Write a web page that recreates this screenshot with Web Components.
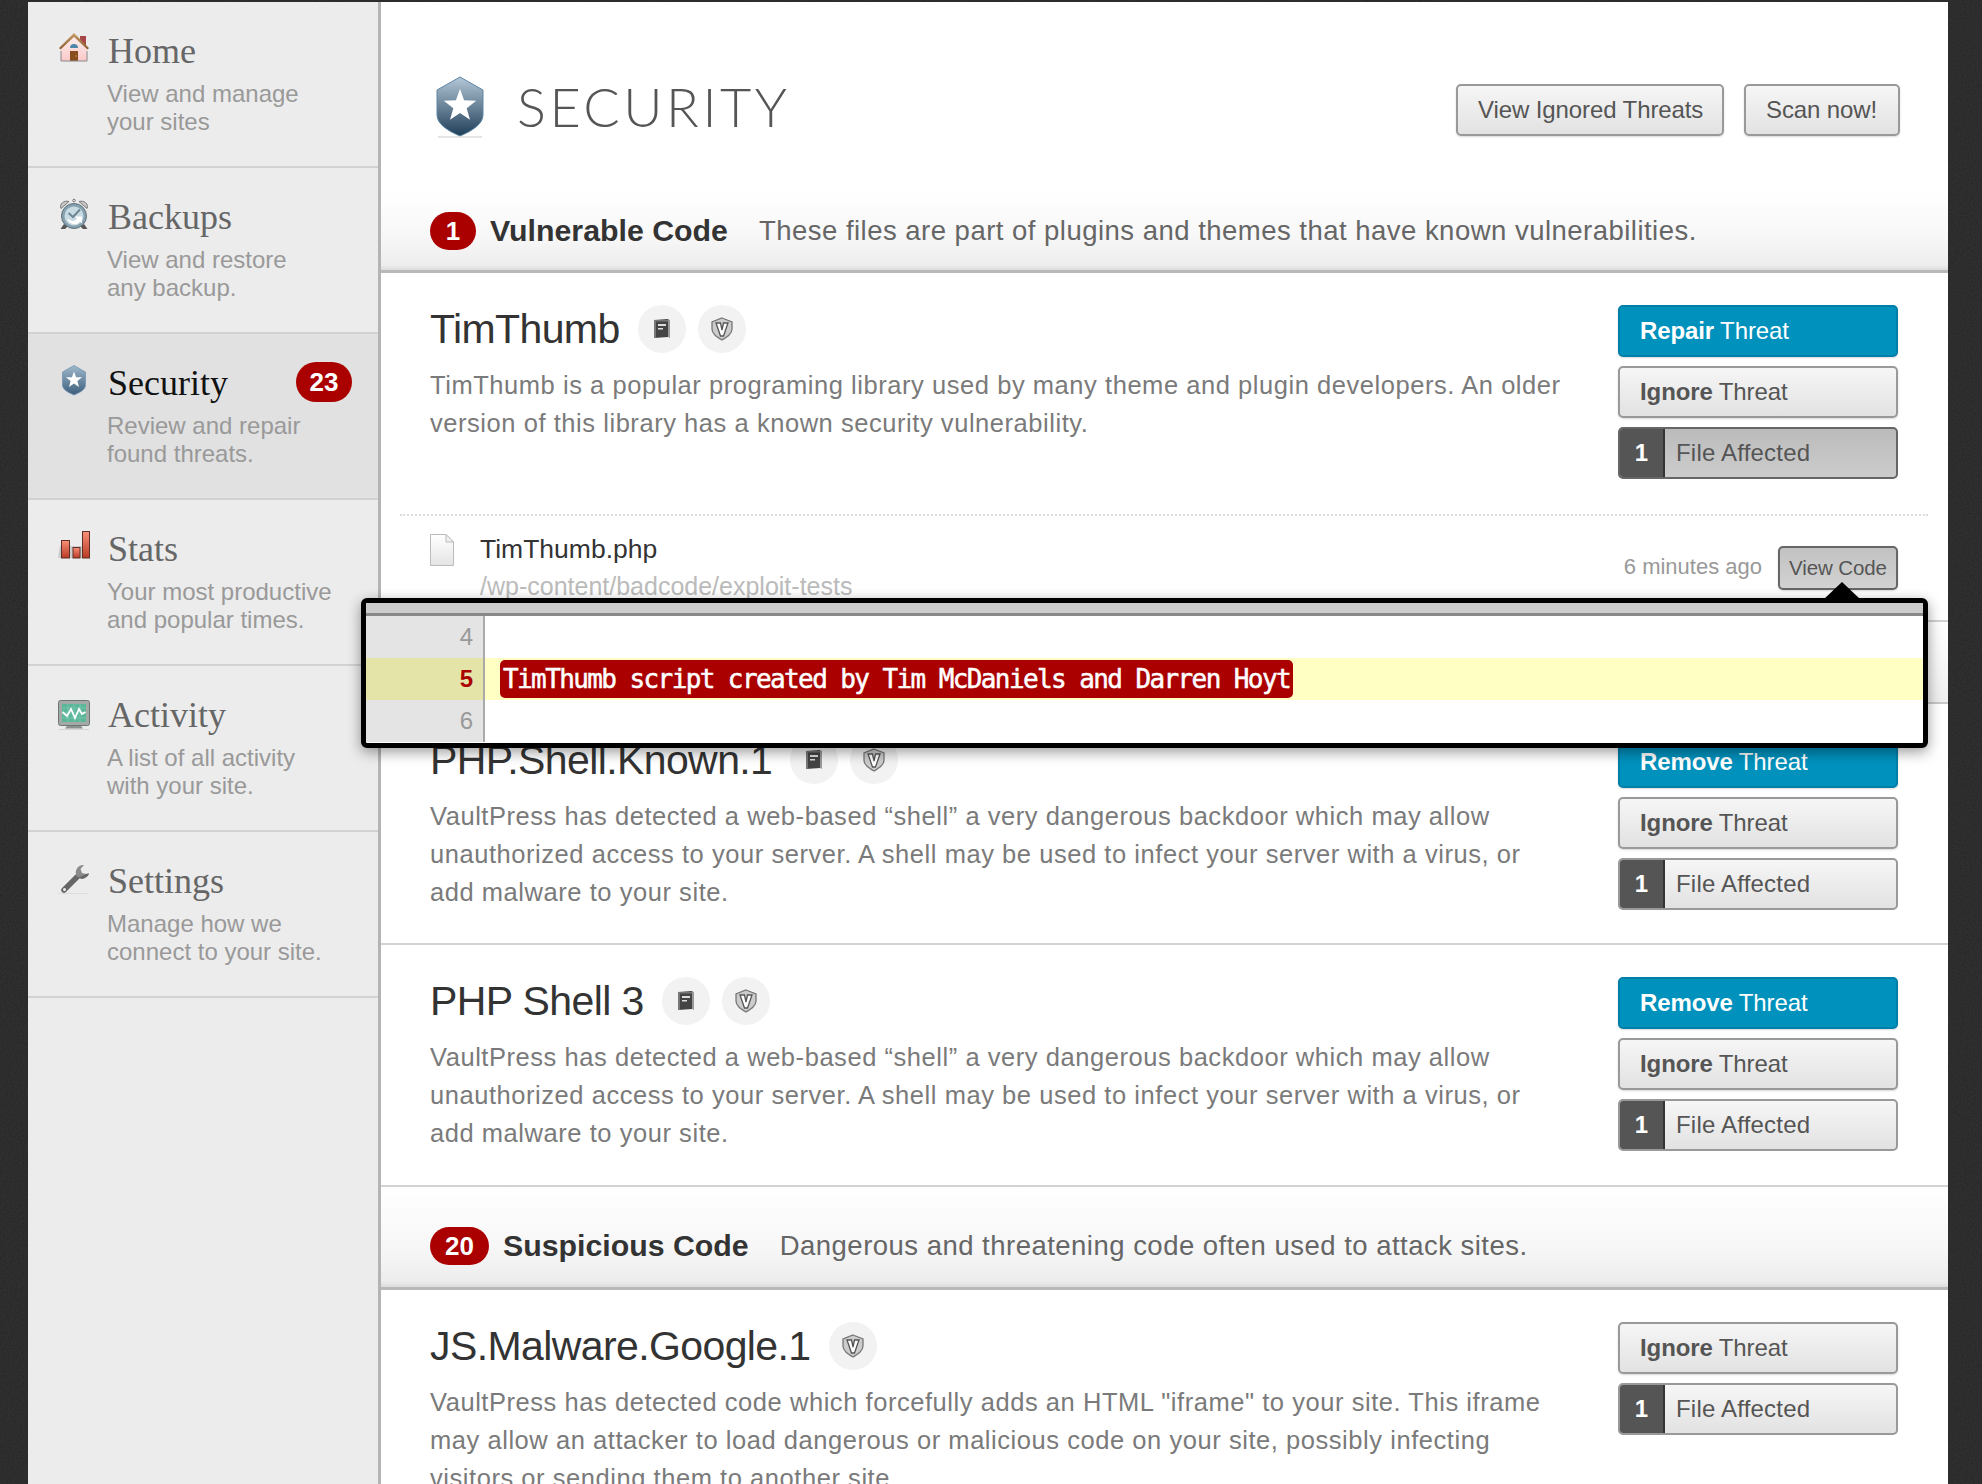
<!DOCTYPE html>
<html>
<head>
<meta charset="utf-8">
<title>Security</title>
<style>
html, body { margin: 0; height: 100%; overflow: hidden; background: #2a2a2a; }
body { font-family: "Liberation Sans", Arial, sans-serif; }
svg { display: block; }
</style>
</head>
<body>
<vp-app>
  <vp-nav-item slot="nav" label="Home" lines="View and manage|your sites">
    <svg slot="icon" width="36" height="36" viewBox="0 0 36 36"><defs><linearGradient id="roof" x1="0" y1="0" x2="0" y2="1"><stop offset="0" stop-color="#c9a06a"/><stop offset="1" stop-color="#8a5a2b"/></linearGradient><linearGradient id="wall" x1="0" y1="0" x2="0" y2="1"><stop offset="0" stop-color="#fff0f0"/><stop offset="1" stop-color="#fbc9c9"/></linearGradient></defs><rect x="22" y="4" width="6" height="9" fill="#a8474a"/><path d="M3 15 16 3 29 15V29H3z" fill="url(#wall)"/><path d="M1 16 16 1 31 16 29.500 17.500 16 5 2.500 17.500z" fill="url(#roof)"/><path d="M12 16a4 4 0 0 1 8 0z" fill="#4f87a8"/><rect x="12" y="19" width="8" height="10" fill="#8a4f1e"/><rect x="17.500" y="23.500" width="1" height="1" fill="#e8d090"/><path d="M3 19V29H29V19" fill="none" stroke="#888" stroke-width="1"/></svg>
  </vp-nav-item>
  <vp-nav-item slot="nav" label="Backups" lines="View and restore|any backup.">
    <svg slot="icon" width="36" height="36" viewBox="0 0 36 36"><path d="M3 10.500C1 6 6 2 11 3.500z M29 10.500C31 6 26 2 21 3.500z" fill="#c8c8c8" stroke="#777"/><circle cx="16" cy="2.500" r="1.300" fill="none" stroke="#777"/><path d="M6 26 2.500 31H7L10 28zM26 26l3.500 5H25l-3-3z" fill="#555"/><circle cx="16" cy="18" r="12.500" fill="#86a2b0" stroke="#5f6f78"/><circle cx="16" cy="18" r="9.500" fill="#c9dbe2"/><path d="M10.500 15 15 19 22 11.500" fill="none" stroke="#6d8794" stroke-width="2"/><path d="M9.500 20.500a7 7 0 0 0 12.500 3l2 2v-7h-7l2 2a4.500 4.500 0 0 1-7.500 1z" fill="#fff"/></svg>
  </vp-nav-item>
  <vp-nav-item slot="nav" label="Security" lines="Review and repair|found threats." count="23" active>
    <svg slot="icon" width="36" height="36" viewBox="0 0 36 36"><defs><linearGradient id="shieldA" x1="0" y1="0" x2="0" y2="1"><stop offset="0" stop-color="#9fb8cb"/><stop offset="1" stop-color="#3c5e7c"/></linearGradient></defs><g transform="translate(4,1) scale(.5)"><path d="M24 1 47 14V40C47 49 36 55 24 60 12 55 1 49 1 40V14z" fill="url(#shieldA)" stroke="#6f93b0" stroke-width="1.500"/><path d="M24 13 28.100 24.300 40.200 24.700 30.700 32.200 34 43.800 24 37 14 43.800 17.300 32.200 7.800 24.700 19.900 24.300z" fill="#fff"/></g></svg>
  </vp-nav-item>
  <vp-nav-item slot="nav" label="Stats" lines="Your most productive|and popular times.">
    <svg slot="icon" width="36" height="36" viewBox="0 0 36 36"><defs><linearGradient id="bar" x1="0" y1="0" x2="0" y2="1"><stop offset="0" stop-color="#f98f77"/><stop offset="1" stop-color="#b93a24"/></linearGradient></defs><path d="M0 28 2 16H24V28z" fill="#ccc"/><rect x="3.500" y="10.500" width="8" height="17.500" fill="url(#bar)" stroke="#5f3028"/><rect x="15" y="17.500" width="7" height="10.500" fill="url(#bar)" stroke="#5f3028"/><rect x="24.500" y="1.500" width="7" height="26.500" fill="url(#bar)" stroke="#5f3028"/></svg>
  </vp-nav-item>
  <vp-nav-item slot="nav" label="Activity" lines="A list of all activity|with your site.">
    <svg slot="icon" width="36" height="36" viewBox="0 0 36 36"><rect x=".5" y="4.500" width="31" height="25" rx="2" fill="#a3aaa6" stroke="#6e7673"/><rect x="4" y="8" width="24" height="18" fill="#5cb79a"/><path d="M4 12H28M4 17H28M4 22H28M10 8V26M16 8V26M22 8V26" stroke="#78c9af" stroke-width=".7"/><path d="M4.500 16 9 20 13 13 17 22 21 13 24 18 27.500 16" fill="none" stroke="#fff" stroke-width="1.800"/><path d="M9 30H23L25 32.500H7z" fill="#8a918e"/><rect x="1" y="33" width="30" height="1" fill="#d4d4d4"/></svg>
  </vp-nav-item>
  <vp-nav-item slot="nav" label="Settings" lines="Manage how we|connect to your site.">
    <svg slot="icon" width="36" height="36" viewBox="0 0 36 36"><path d="M6 28 19 15" stroke="#666" stroke-width="5.500" stroke-linecap="round"/><path d="M31 11.500a7.500 7.500 0 0 1-12 3 7.500 7.500 0 0 1 7-11.500L22.500 7 24 11l4 1z" fill="#8a8a8a"/><path d="M19 15a7.500 7.500 0 0 0 12-3.500L28 12l-6 3z" fill="#666"/><circle cx="6.500" cy="27.500" r="1.500" fill="#eee"/><rect x="0" y="31" width="30" height="1" fill="#ddd"/></svg>
  </vp-nav-item>

  <vp-page-head heading="SECURITY">
    <svg slot="icon" width="48" height="62" viewBox="0 0 48 62"><defs><linearGradient id="shieldB" x1="0" y1="0" x2="0" y2="1"><stop offset="0" stop-color="#b4c8d8"/><stop offset="1" stop-color="#1f3e58"/></linearGradient></defs><path d="M24 1 47 14V39C47 48 36 55 24 60 12 55 1 48 1 39V14z" fill="url(#shieldB)" stroke="#5f86a6"/><path d="M24 13 28.100 24.300 40.200 24.700 30.700 32.200 34 43.800 24 37 14 43.800 17.300 32.200 7.800 24.700 19.900 24.300z" fill="#fff"/><rect x="2" y="60.500" width="44" height="1" fill="#ccc"/></svg>
    <vp-button slot="actions" size="head">View Ignored Threats</vp-button>
    <vp-button slot="actions" size="scan">Scan now!</vp-button>
  </vp-page-head>

  <vp-section-band count="1" heading="Vulnerable Code" text="These files are part of plugins and themes that have known vulnerabilities."></vp-section-band>

  <vp-threat name="TimThumb" action="Repair" book noborder lines="TimThumb is a popular programing library used by many theme and plugin developers. An older|version of this library has a known security vulnerability."></vp-threat>
  <vp-file-row name="TimThumb.php" path="/wp-content/badcode/exploit-tests" time="6 minutes ago"></vp-file-row>

  <vp-section-band empty></vp-section-band>

  <vp-threat name="PHP.Shell.Known.1" action="Remove" book lines="VaultPress has detected a web-based “shell” a very dangerous backdoor which may allow|unauthorized access to your server. A shell may be used to infect your server with a virus, or|add malware to your site."></vp-threat>
  <vp-threat name="PHP Shell 3" action="Remove" book noborder short lines="VaultPress has detected a web-based “shell” a very dangerous backdoor which may allow|unauthorized access to your server. A shell may be used to infect your server with a virus, or|add malware to your site."></vp-threat>

  <vp-section-band count="20" heading="Suspicious Code" text="Dangerous and threatening code often used to attack sites." wide></vp-section-band>

  <vp-threat name="JS.Malware.Google.1" noborder lines="VaultPress has detected code which forcefully adds an HTML &quot;iframe&quot; to your site. This iframe|may allow an attacker to load dangerous or malicious code on your site, possibly infecting|visitors or sending them to another site."></vp-threat>

  <vp-code-popup slot="overlay"></vp-code-popup>
</vp-app>

<script>
// small helper, every element renders its own shadow root from a string
function shadow(el, html) {
    el.attachShadow({ mode: 'open' }).innerHTML = html;
}

class VpApp extends HTMLElement {
    connectedCallback() {
        shadow(this, `
            <style>
                :host { display: block; position: relative; width: 1982px; height: 1484px; overflow: hidden; background: #303030; }
                .noise { position: absolute; inset: 0; }
                .frame { position: relative; display: grid; grid-template-columns: 350px 1570px; margin: 2px 0 0 28px; width: 1920px; height: 1482px; }
                nav { background: #ececec; display: flex; flex-direction: column; }
                main { background: #fff; border-left: 3px solid #b4b4b4; box-sizing: border-box; overflow: hidden; }
            </style>
            <svg class="noise" width="1982" height="1484"><filter id="n" color-interpolation-filters="sRGB"><feTurbulence type="fractalNoise" baseFrequency=".6" numOctaves="2"/><feColorMatrix values="0 0 0 0 .13  0 0 0 0 .13  0 0 0 0 .13  0 0 0 1.100 -.35"/></filter><rect width="1982" height="1484" filter="url(#n)"/></svg>
            <div class="frame">
                <nav><slot name="nav"></slot></nav>
                <main><slot></slot></main>
            </div>
            <slot name="overlay"></slot>
        `);
    }
}

class VpNavItem extends HTMLElement {
    connectedCallback() {
        const lines = this.getAttribute('lines').split('|').map(l => `<div>${l}</div>`).join('');
        const count = this.getAttribute('count');
        shadow(this, `
            <style>
                :host { display: block; height: 166px; box-sizing: border-box; border-bottom: 2px solid #d2d2d2; position: relative; padding: 30px 0 0 30px; background: #ececec; }
                :host([active]) { background: #e1e1e1; }
                .row { display: flex; gap: 14px; }
                .icon { width: 36px; height: 36px; flex: none; }
                h2 { margin: 0; font: 400 36px/38px "Liberation Serif", serif; color: #666; }
                :host([active]) h2 { color: #111; }
                .sub { margin: 10px 0 0 -1px; font: 24px/27.500px "Liberation Sans", sans-serif; color: #999; }
                .count { position: absolute; right: 26px; top: 28px; width: 56px; height: 40px; border-radius: 20px; background: #ab0000; color: #fff; font: 700 26px/40px "Liberation Sans", sans-serif; text-align: center; }
            </style>
            <div class="row">
                <div class="icon"><slot name="icon"></slot></div>
                <div>
                    <h2>${this.getAttribute('label')}</h2>
                    <div class="sub">${lines}</div>
                </div>
            </div>
            ${count ? `<span class="count">${count}</span>` : ''}
        `);
    }
}

class VpPageHead extends HTMLElement {
    connectedCallback() {
        shadow(this, `
            <style>
                :host { display: flex; align-items: center; height: 188px; box-sizing: border-box; padding: 22px 48px 0 55px; }
                h1 { margin: 0 0 0 33px; font: 300 54px/64px Lato, sans-serif; letter-spacing: 3.500px; color: #555; flex: 1; }
                .actions { display: flex; gap: 20px; margin-top: 5px; }
            </style>
            <slot name="icon"></slot>
            <h1>${this.getAttribute('heading')}</h1>
            <div class="actions"><slot name="actions"></slot></div>
        `);
    }
}

class VpButton extends HTMLElement {
    connectedCallback() {
        shadow(this, `
            <style>
                :host { display: flex; align-items: center; box-sizing: border-box; height: 52px; padding: 0 20px; border: 2px solid #999; border-radius: 5px; background: linear-gradient(#f6f6f6, #e2e2e2); box-shadow: 0 1px 2px rgba(0,0,0,.15); color: #555; font: 24px "Liberation Sans", sans-serif; letter-spacing: -.1px; white-space: nowrap; }
                :host([size="head"]) { width: 268px; }
                :host([size="scan"]) { width: 156px; }
                :host([tone="primary"]) { background: #0091bd; border-color: #0080a8; color: #fff; }
                :host([tone="small"]) { font-size: 20.500px; height: 44px; width: 120px; padding: 0 9px; background: linear-gradient(#c2c2c2, #d2d2d2); border-color: #666; }
            </style>
            <slot></slot>
        `);
    }
}

class VpSectionBand extends HTMLElement {
    connectedCallback() {
        const count = this.getAttribute('count');
        if (this.hasAttribute('empty')) {
            shadow(this, `<style>:host { display: block; height: 84px; box-sizing: border-box; border-top: 2px solid #d2d2d2; border-bottom: 2px solid #c8c8c8; background: linear-gradient(#fff, #eee); }</style>`);
            return;
        }
        shadow(this, `
            <style>
                :host { box-sizing: border-box; height: ${count === '1' ? 83 : 105}px; border-bottom: 3px solid #b8b8b8; background: linear-gradient(#fff 0, #f7f7f7 60%, #ededed 94%, #dcdcdc 100%); padding: 2px 0 0 49px; display: flex; align-items: center; }
                :host([wide]) { border-top: 2px solid #d2d2d2; padding-top: 18px; }
                .count { flex: none; min-width: 46px; padding: 0 ${count === '1' ? 0 : 15}px; box-sizing: border-box; height: 38px; border-radius: 19px; background: #ab0000; color: #fff; font: 700 26px/38px "Liberation Sans", sans-serif; text-align: center; }
                h3 { margin: 0 0 0 14px; font: 700 30.300px "Liberation Sans", sans-serif; color: #333; white-space: nowrap; }
                p { margin: 0 0 0 31px; font: 27.500px "Liberation Sans", sans-serif; letter-spacing: .48px; color: #666; white-space: nowrap; }
            </style>
            <span class="count">${count}</span>
            <h3>${this.getAttribute('heading')}</h3>
            <p>${this.getAttribute('text')}</p>
        `);
    }
}

class VpThreat extends HTMLElement {
    connectedCallback() {
        const lines = this.getAttribute('lines').split('|').map(l => `<div>${l}</div>`).join('');
        const action = this.getAttribute('action');
        const book = `<span class="dot"><svg width="18" height="21" viewBox="0 0 18 21"><path d="M1 2 15 1V19L1 20z" fill="#444"/><path d="M15 1 17 2V20L15 19z" fill="#999"/><path d="M1 2H15V3.500H3V20H1z" fill="#777"/><path d="M5 6H13V8H5zM5 10H10V11.500H5z" fill="#ddd"/></svg></span>`;
        const vee = `<span class="dot"><svg width="24" height="24" viewBox="0 0 24 24"><path d="M12 1 22 5V12C22 17 17 20 12 23 7 20 2 17 2 12V5z" fill="#ccc" stroke="#777" stroke-width="1.300"/><path d="M6 6H10.500L12 13 13.500 6H18L13.500 19H10.500z" fill="#fff" stroke="#555" stroke-width="1.300"/></svg></span>`;
        shadow(this, `
            <style>
                :host { display: grid; grid-template-columns: 1188px 280px; height: 241px; box-sizing: border-box; padding: 31.500px 0 0 49px; border-bottom: 2px solid #d2d2d2; }
                :host([noborder]) { border-bottom: 0; }
                :host([short]) { height: 240px; }
                .head { display: flex; align-items: center; gap: 12px; height: 48px; }
                h4 { margin: 0 6px 0 0; font: 400 41px/48px "Liberation Sans", sans-serif; color: #333; letter-spacing: -.6px; white-space: nowrap; }
                .dot { width: 48px; height: 48px; border-radius: 50%; background: #f2f2f2; display: flex; align-items: center; justify-content: center; }
                .desc { margin: 13.500px 0 0; font: 25.500px/38px "Liberation Sans", sans-serif; color: #7a7a7a; letter-spacing: .55px; white-space: nowrap; }
                .actions { display: flex; flex-direction: column; gap: 9px; }
                .files { height: 52px; box-sizing: border-box; border: 2px solid #999; border-radius: 5px; background: linear-gradient(#f6f6f6, #e2e2e2); display: flex; align-items: center; font: 24px "Liberation Sans", sans-serif; letter-spacing: .2px; color: #555; overflow: hidden; }
                .files.open { background: linear-gradient(#bbb, #ccc); border-color: #666; }
                .files b { width: 43px; height: 100%; background: #555; color: #fff; display: flex; align-items: center; justify-content: center; margin-right: 11px; border-right: 2px solid #333; }
            </style>
            <div>
                <div class="head"><h4>${this.getAttribute('name')}</h4>${this.hasAttribute('book') ? book : ''}${vee}</div>
                <div class="desc">${lines}</div>
            </div>
            <div class="actions">
                ${action ? `<vp-button tone="primary"><b style="font-weight:700;margin-right:6px">${action}</b> Threat</vp-button>` : ''}
                <vp-button><b style="font-weight:700;margin-right:6px">Ignore</b> Threat</vp-button>
                <div class="files ${action === 'Repair' ? 'open' : ''}"><b>1</b>File Affected</div>
            </div>
        `);
    }
}

class VpFileRow extends HTMLElement {
    connectedCallback() {
        shadow(this, `
            <style>
                :host { display: flex; position: relative; height: 106px; box-sizing: border-box; padding: 20px 50px 0 49px; }
                :host::before { content: ""; position: absolute; top: 0; left: 19px; right: 20px; border-top: 2px dotted #ddd; }
                .icon { width: 24px; margin-right: 26px; }
                .name { font: 26.500px/30px "Liberation Sans", sans-serif; color: #333; }
                .path { font: 25px/30px "Liberation Sans", sans-serif; color: #bbb; margin-top: 7px; }
                .grow { flex: 1; }
                .time { font: 22px/52px "Liberation Sans", sans-serif; color: #999; margin: 7px 16px 0 0; }
                vp-button { margin-top: 12px; }
            </style>
            <div class="icon"><svg width="24" height="32" viewBox="0 0 24 32"><defs><linearGradient id="pg" x1="0" y1="0" x2="0" y2="1"><stop offset="0" stop-color="#fff"/><stop offset="1" stop-color="#e4e4e4"/></linearGradient></defs><path d="M.5 .5H16L23.500 8V31.500H.5z" fill="url(#pg)" stroke="#bbb"/><path d="M16 .5V8H23.500z" fill="#f0f0f0" stroke="#bbb"/></svg></div>
            <div class="grow">
                <div class="name">${this.getAttribute('name')}</div>
                <div class="path">${this.getAttribute('path')}</div>
            </div>
            <div class="time">${this.getAttribute('time')}</div>
            <vp-button tone="small">View Code</vp-button>
        `);
    }
}

class VpCodePopup extends HTMLElement {
    connectedCallback() {
        shadow(this, `
            <style>
                :host { position: absolute; left: 361px; top: 598px; width: 1567px; height: 150px; box-sizing: border-box; border: 5px solid #000; border-radius: 6px; background: #fff; box-shadow: 0 4px 14px rgba(0,0,0,.4); display: block; }
                .arrow { position: absolute; right: 63px; top: -21px; width: 0; height: 0; border: 18px solid transparent; border-top: 0; border-bottom: 17px solid #000; }
                .top { height: 10px; background: #ccc; border-bottom: 3px solid #888; }
                .row { display: grid; grid-template-columns: 119px 1fr; height: 42px; }
                .num { background: #e4e4e4; border-right: 2px solid #aaa; box-sizing: border-box; text-align: right; padding-right: 10px; font: 24px/42px "Liberation Sans", sans-serif; color: #999; }
                .row.hit { background: #ffffc4; }
                .row.hit .num { background: #e5e4a8; color: #ab0000; font-weight: 700; }
                .code { padding-left: 15px; align-self: center; }
                mark { display: inline-block; background: #ab0000; color: #fff; border-radius: 5px; padding: 0 3px; font: 400 26px/38px "DejaVu Sans Mono", monospace; -webkit-text-stroke: .5px #fff; letter-spacing: -1.600px; }
            </style>
            <span class="arrow"></span>
            <div class="top"></div>
            <div class="row"><div class="num">4</div><div class="code"></div></div>
            <div class="row hit"><div class="num">5</div><div class="code"><mark>TimThumb script created by Tim McDaniels and Darren Hoyt</mark></div></div>
            <div class="row"><div class="num">6</div><div class="code"></div></div>
        `);
    }
}

customElements.define('vp-app', VpApp);
customElements.define('vp-nav-item', VpNavItem);
customElements.define('vp-page-head', VpPageHead);
customElements.define('vp-button', VpButton);
customElements.define('vp-section-band', VpSectionBand);
customElements.define('vp-threat', VpThreat);
customElements.define('vp-file-row', VpFileRow);
customElements.define('vp-code-popup', VpCodePopup);
</script>
</body>
</html>
